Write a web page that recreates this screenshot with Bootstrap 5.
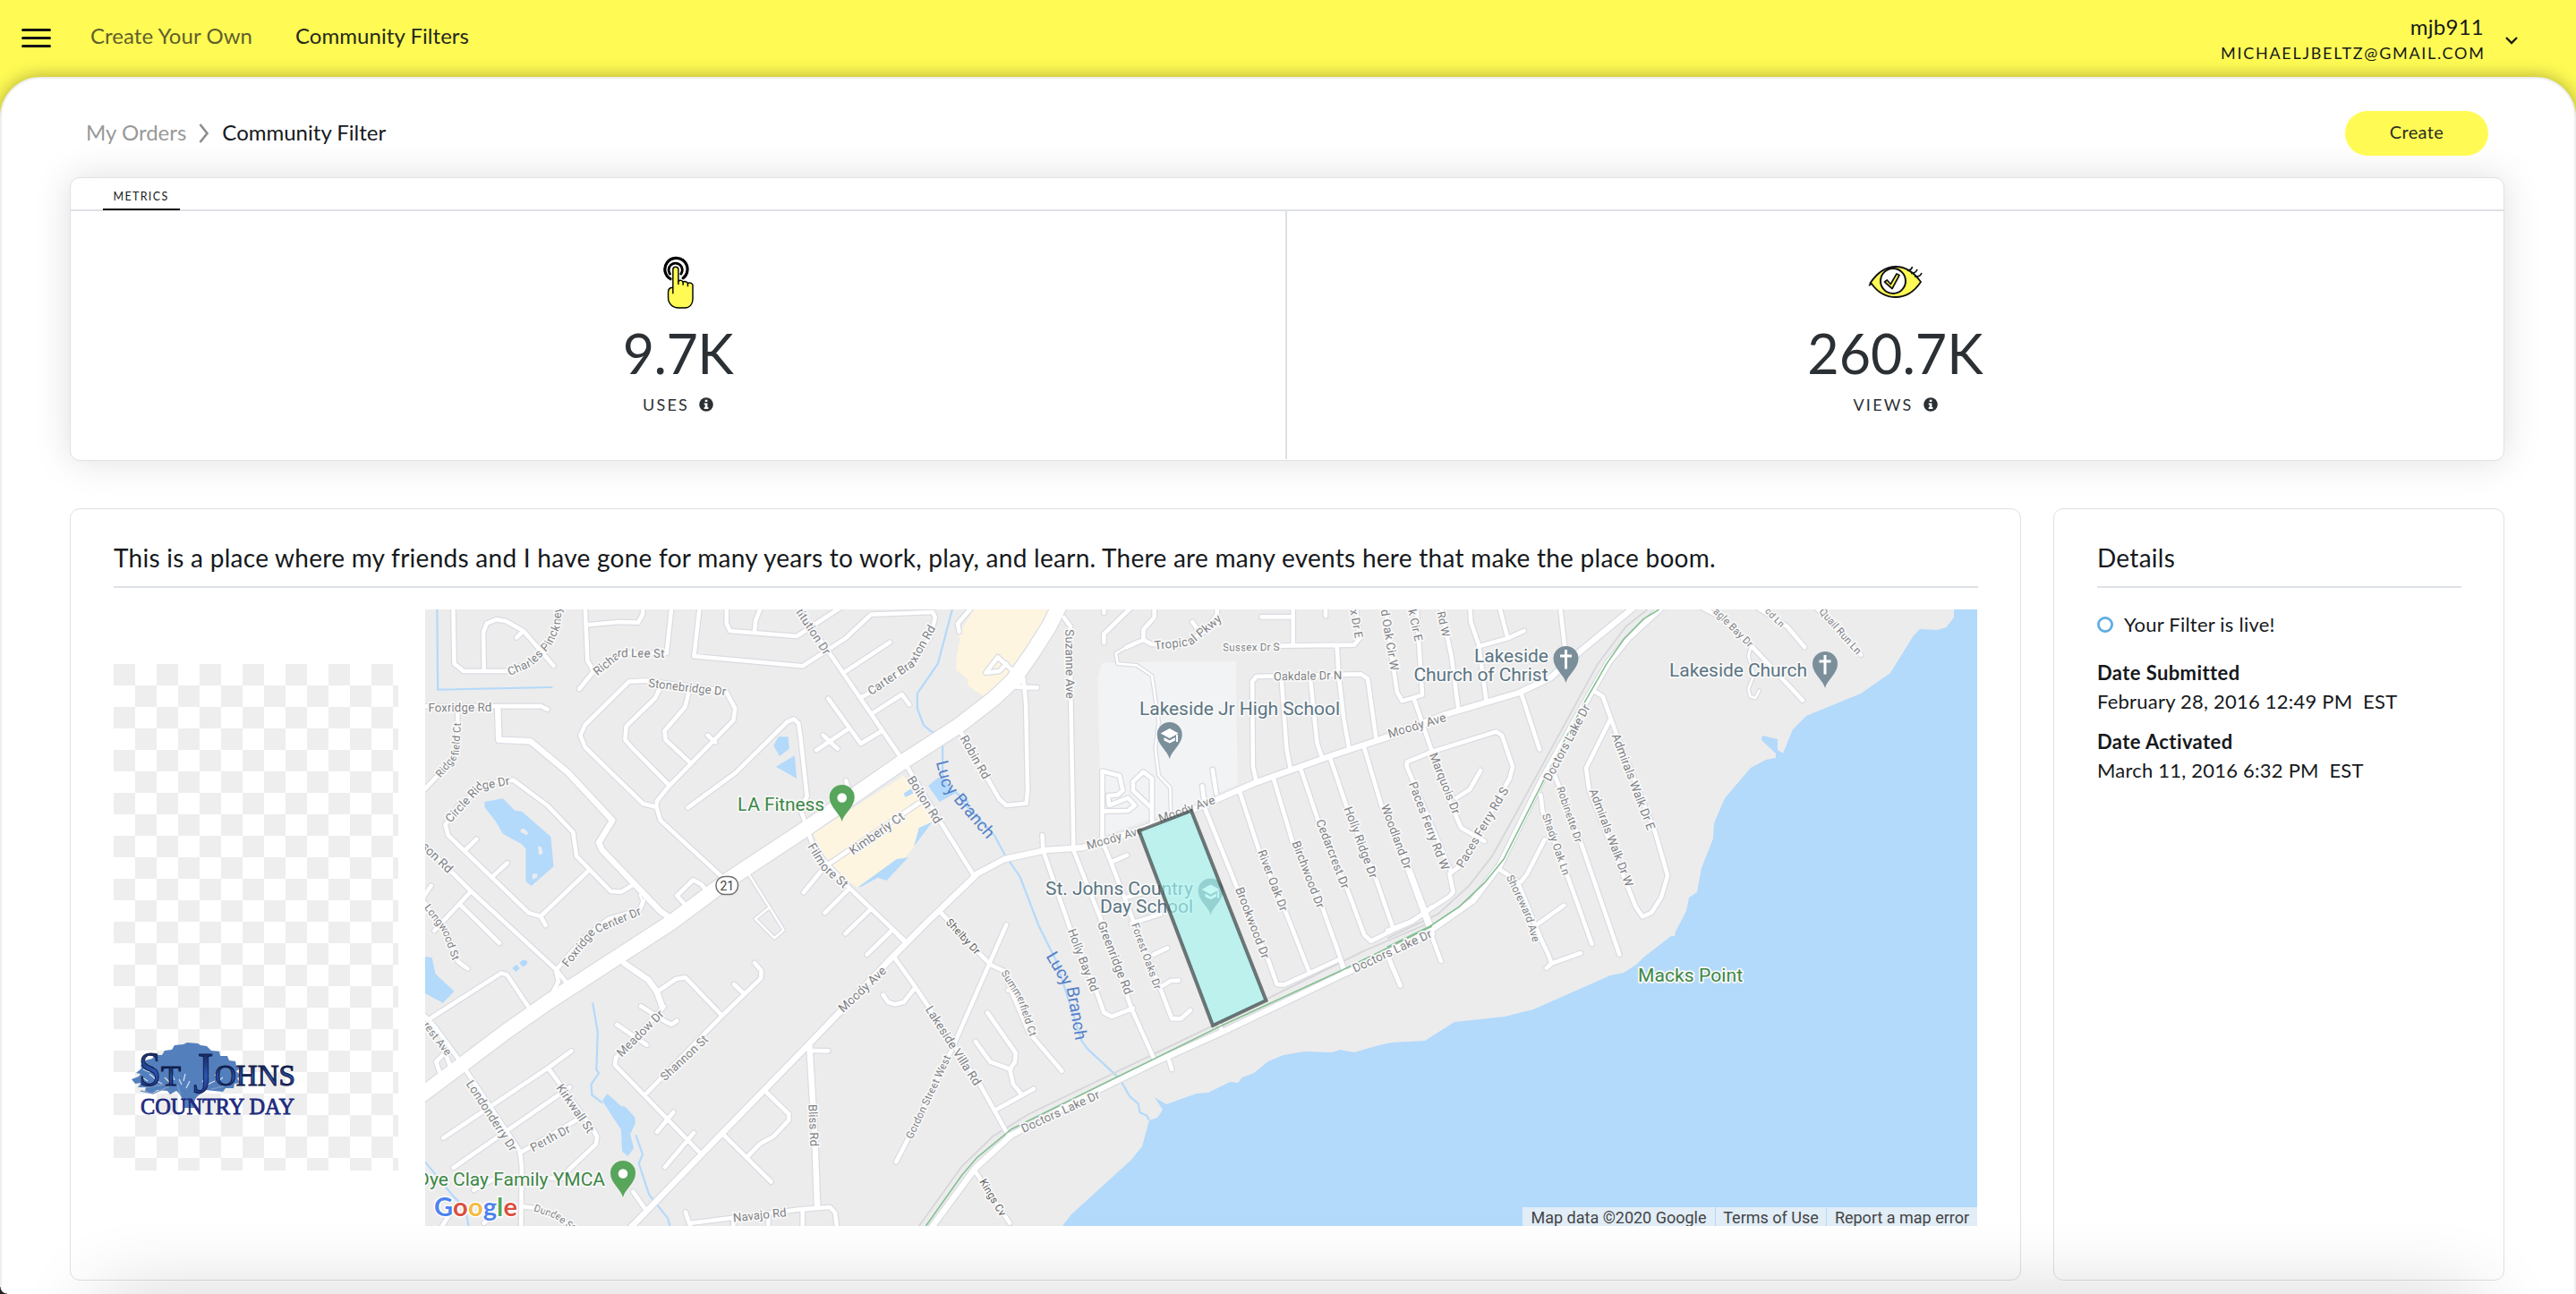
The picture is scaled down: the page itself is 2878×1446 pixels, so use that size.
<!DOCTYPE html>
<html lang="en">
<head>
<meta charset="utf-8">
<meta name="viewport" content="width=device-width, initial-scale=1">
<title>Community Filter</title>
<link href="https://cdn.jsdelivr.net/npm/bootstrap@5.3.0/dist/css/bootstrap.min.css" rel="stylesheet">
<style>
  html, body { height: 100%; overflow: hidden; }
  body { background: #fffb54; font-family: Lato, "Noto Sans", sans-serif; color: #16191c; line-height: 1; }
  .topbar { height: 86px; padding: 0 65px 0 24px; }
  .menu-icon { width: 33px; height: 22px; margin-right: 44px; }
  .top-link { font-size: 24px; color: #5f5f2c; text-decoration: none; white-space: nowrap; letter-spacing: .05px; padding-bottom: 6px; }
  .top-link.current { color: #26281c; }
  .sheet { height: 1400px; background: #fff; border: 2px solid #efefef; border-radius: 45px 45px 0 0; box-shadow: 0 0 20px rgba(0,0,0,.33); padding: 36px 78px 0 76px; }
  .user-name { letter-spacing: .25px; }
  .user-mail { font-size: 18px; letter-spacing: 1.72px; margin-right: -1.7px; }
  .crumbs { font-size: 24px; padding: 0 0 3px 18px; }
  .crumbs a { color: #999; text-decoration: none; }
  .btn-create { width: 160px; height: 50px; background: #fffb54; color: #2b2d22; font-size: 20px; border: 0; padding: 0 0 5px; margin-right: 18px; letter-spacing: .35px; }
  .panel { border: 1.5px solid #dee2e6; border-radius: 11px; background: #fff; }
  .metrics { height: 317px; margin-top: 24px; box-shadow: 0 0 42px rgba(0,0,0,.13); }
  .tabs { height: 37px; border-bottom: 2px solid #dee2e6; padding-left: 36px; }
  .tab-on { width: 86px; height: 36px; font-size: 12.5px; padding-top: 15px; border-bottom: 2.5px solid #111; text-align: center; letter-spacing: 1.35px; text-indent: -1px; }
  .half { height: 277px; padding-top: 49px; }
  .metric-value { font-size: 61px; color: #2b3035; margin-top: 17px; }
  .metric-label { font-size: 18px; color: #2b3035; letter-spacing: 2.25px; margin-top: 18px; }
  .divide { border-right: 2px solid #dee2e6; }
  .lower { margin-top: 53px; gap: 36px; }
  .lower .panel { height: 863px; padding: 40px 47px 0 48px; }
  .headline { font-size: 28px; height: 48px; border-bottom: 2px solid #dee2e6; white-space: nowrap; letter-spacing: .27px; }
  .main-card { width: 2180px; }
  .side-card { width: 504px; }
  .preview { width: 318px; height: 566px; margin-top: 61px; background: #fff repeating-conic-gradient(#fff 0 25%, #eee 0 50%) 0 0 / 48px 48px; }
  .map-box { width: 1734px; height: 689px; overflow: hidden; }
  .map-legal { position: absolute; right: 0; bottom: 0; font: 18px/21px Roboto, sans-serif; color: #444; gap: 1px; }
  .map-legal span { background: #e1edf7; height: 21px; padding: 1px 8px 0; white-space: nowrap; text-align: center; }
  .facts { font-size: 22px; letter-spacing: .22px; }
  .facts .fw-bold { letter-spacing: .4px; }
  .stamp { margin-top: 10px; white-space: pre; }
  .bottom-shade { position: absolute; left: 120px; right: 120px; top: 1462px; height: 50px; box-shadow: 0 0 90px 10px rgba(0,0,0,.2); }
  .win-corner { position: absolute; left: 0; bottom: 0; width: 8px; height: 8px; background: radial-gradient(circle at 100% 0, transparent 7px, #222 8px); }
  #roads path { fill: none; stroke-linecap: round; stroke-linejoin: round; vector-effect: non-scaling-stroke; stroke-width: calc(4.6px + var(--edge)); }
  #roads path.mid { stroke-width: calc(6.5px + var(--edge)); }
  #roads path.hwy { stroke-width: calc(16.5px + var(--edge)); }
  #roads path.thin { stroke-width: calc(2.6px + var(--edge)); }
  .casing { --edge: 2.4px; stroke: #dadbe2; }
  .fillup { --edge: 0px; stroke: #fff; }
  .brook { fill: none; stroke: #b3d9fb; stroke-width: 2.2px; vector-effect: non-scaling-stroke; }
  .lake { fill: #b3d9fb; } .shops { fill: #fdf5e0; }
  .rail { fill: none; stroke: #d6d6da; stroke-width: 1.8px; vector-effect: non-scaling-stroke; }
  .trail { fill: none; stroke: #86bf92; stroke-width: 1.6px; vector-effect: non-scaling-stroke; }
  .halo { paint-order: stroke; stroke: #f8f8f8; stroke-width: 3.6px; stroke-linejoin: round; font-family: Roboto, sans-serif; }
  .street { fill: #7e8185; } .street.dark { fill: #5d5d5a; } .street.blue { fill: #5580c8; stroke: none; }
  .poi { font-size: 21px; fill: #5b7583; } .poi.go { fill: #3c8746; }
</style>
</head>
<body class="position-relative">
<header class="topbar d-flex align-items-center justify-content-between">
  <nav class="d-flex align-items-center">
    <svg class="menu-icon" viewBox="0 0 33 22"><path d="M1.500 1.500h30M1.500 10.500h30M1.500 19.500h30" stroke="#141414" stroke-width="3" stroke-linecap="round"/></svg>
    <a class="top-link me-5" href="#">Create Your Own</a>
    <a class="top-link current" href="#">Community Filters</a>
  </nav>
  <div class="d-flex align-items-center">
    <div class="text-end me-4">
      <div class="user-name fs-4 mb-2">mjb911</div>
      <div class="user-mail">MICHAELJBELTZ@GMAIL.COM</div>
    </div>
    <svg class="mt-1" width="14" height="9" viewBox="0 0 14 9"><path d="M1 1l6 6 6-6" fill="none" stroke="#1b1b10" stroke-width="2.400"/></svg>
  </div>
</header>
<main class="sheet">
  <div class="d-flex justify-content-between align-items-center">
    <div class="crumbs d-flex align-items-center">
      <a href="#">My Orders</a>
      <svg style="margin:3px 14px 0" width="12" height="22" viewBox="0 0 12 22"><path d="M1.500 1l8 10-8 10" fill="none" stroke="#8d8d8d" stroke-width="2.600"/></svg>
      <span>Community Filter</span>
    </div>
    <button class="btn btn-create rounded-pill">Create</button>
  </div>

  <section class="panel metrics">
    <div class="tabs"><div class="tab-on">METRICS</div></div>
    <div class="d-flex">
      <div class="half w-50 divide text-center">
        <svg class="d-block mx-auto" width="36" height="62" viewBox="0 0 38 62">
          <g fill="none" stroke="#000" stroke-width="3.400" stroke-linecap="round"><path d="M9.500 26.500A13.300 13.300 0 1 1 24.500 25.500"/><path d="M9 20.500A8 8 0 1 1 22 20.500" stroke-width="3"/></g>
          <path d="M12.500 44V15.500a3.200 3.200 0 0 1 6.400 0V29c2-1.500 4.500-1 5.500 1 2-1 4.500-.5 5.500 1.500 2.500-1 6 0 6 2.500v16c0 6-3.500 10.500-9 10.500h-8c-7 0-12-5-12-12V42c0-3.500 2-5.500 5.600-5.500" fill="#fffb54" stroke="#000" stroke-width="1.500"/><path d="M24.400 30v4M30 31.500v4M18.900 29v4" stroke="#000" stroke-width="1.500"/>
        </svg>
        <div class="metric-value" style="letter-spacing:-.5px">9.7K</div>
        <div class="metric-label d-flex justify-content-center align-items-center"><span>USES</span><svg style="margin-left:11px" width="16" height="16" viewBox="0 0 16 16"><circle cx="8" cy="8" r="7.800" fill="#2b3035"/><path d="M6.700 2.800h2.700v2.300H6.700zM5.700 6.400h3.700v4.700h1v1.800H5.700v-1.800h1V8.200h-1z" fill="#fff"/></svg></div>
      </div>
      <div class="half w-50 text-center">
        <svg class="d-block mx-auto" width="64" height="62" viewBox="-2 -13 64 62">
          <path d="M1 19C11 4 21 0 30 0c11 0 20 6 28 17-8 12-17 17-28 17S10 29 3 19l-3 2" fill="#fffb54" stroke="#111" stroke-width="1.800"/>
          <circle cx="27" cy="16" r="14" fill="#fff" stroke="#111" stroke-width="2"/>
          <path d="M17.500 17l2.800-2 4 4.500L31 8l3 1.500L26 24.500z" fill="#fffb54" stroke="#111" stroke-width="1.700" stroke-linejoin="round"/>
          <path d="M43 4.500c3-.5 5-2 5.500-4.500M47 7.500c4 0 6-1.500 7-4.500M51 11c4 .5 7-1 8-4" fill="none" stroke="#111" stroke-width="1.600"/>
        </svg>
        <div class="metric-value">260.7K</div>
        <div class="metric-label d-flex justify-content-center align-items-center"><span>VIEWS</span><svg style="margin-left:11px" width="16" height="16" viewBox="0 0 16 16"><circle cx="8" cy="8" r="7.800" fill="#2b3035"/><path d="M6.700 2.800h2.700v2.300H6.700zM5.700 6.400h3.700v4.700h1v1.800H5.700v-1.800h1V8.200h-1z" fill="#fff"/></svg></div>
      </div>
    </div>
  </section>

  <section class="lower d-flex">
    <article class="panel main-card">
      <div class="headline">This is a place where my friends and I have gone for many years to work, play, and learn. There are many events here that make the place boom.</div>
      <div class="d-flex" style="gap:30px;margin-top:24px">
        <div class="preview">
          <svg width="318" height="566" viewBox="127 742 318 566">
            <defs><linearGradient id="ink" x1="0" y1="0" x2="0" y2="1"><stop offset="0" stop-color="#0a1330"/><stop offset=".55" stop-color="#2b55b0"/><stop offset="1" stop-color="#1a2070"/></linearGradient></defs>
            <path fill="#537fbd" d="M147 1206l8-3 2-3-5-1 6-5-1-4 6-1-1-4 8-2 3-4 8 0 3-5 8-1 3-5 10-1 4-2 12 1 3 2 7 1 5 5 9 1 1 5 8 0 2 5 7 1 1 5 4 3-4 3 5 5-4 3 3 5-6 1-1 5-9 0-3 4-10-1-9-1-8 6c-5 4-6 8-4 14h-13c1-7-3-15-8-19l-7 4-3-4-11-1-7 4-7-3 1-4-9 0 4-5-7 1z"/>
            <path d="M157 1219l14 3 18-8M163 1215l20-3M236 1217l14-3M198 1212l4 12" fill="none" stroke="#7898c6" stroke-width="1.400"/>
            <path d="M159 1204l6 4M167 1200l7 6M175 1208l6 3M184 1204l6 6M192 1200l3 7M233 1201l-7 8M246 1196l-6 6M160 1195l7 3M207 1200l-2 8M240 1208l-8 4M200 1206l3 6M212 1208l-4 8M249 1204l-6 5M172 1193l4 5" stroke="#d3deee" stroke-width="1.300"/>
            <g font-family="'Liberation Serif',serif" fill="url(#ink)" stroke="#101a48" stroke-width="1.100">
              <text x="155" y="1213" font-size="55" textLength="25" lengthAdjust="spacingAndGlyphs">S</text>
              <text x="180" y="1213" font-size="32" textLength="22" lengthAdjust="spacingAndGlyphs">T</text>
              <text x="216" y="1221" font-size="66" textLength="22" lengthAdjust="spacingAndGlyphs">J</text>
              <text x="240" y="1213" font-size="33" textLength="90" lengthAdjust="spacingAndGlyphs">OHNS</text>
              <text x="157" y="1245" font-size="25" fill="#202a80" stroke="#202a80" stroke-width=".8" textLength="172" lengthAdjust="spacingAndGlyphs">COUNTRY DAY</text>
            </g>
          </svg>
        </div>
        <div class="map-box position-relative">
          <svg width="1734" height="689" viewBox="475 681 1734 689" id="map">
            <defs>
              <path id="pin" d="M0 0C-2-9-14-16-14-27A14 14 0 1 1 14-27C14-16 2-9 0 0Z"/>
              <g id="roads">
                <g transform="translate(470 670) scale(.38265 .33333)">
                  <path d="M95 20L98 215 125 240 250 240M185 240L183 110 193 80 220 67 248 72 300 105 388 222M300 105L280 127M250 240L330 205 380 130 400 60 403 20M480 20L487 205 505 240 463 300M505 240L580 180 718 180 733 20M487 85L580 75 635 77 648 50 650 20M815 20L798 190 1115 223 1240 130 1315 50 1495 42 1502 60 1490 120 1440 210 1350 290 1285 328M893 20V80L903 105 1098 123 1235 20M975 105L978 70 995 20M1235 245L1370 143M1318 382L1405 318 1427 352M1190 332L1285 483 1340 445M1245 436L1155 505M1175 455L1217 500M660 272L608 275 480 420 466 455 480 495 650 685 688 695M660 272L890 305 918 365 913 405 725 625 690 675 688 695 700 740 785 830 880 930M697 300L685 330 600 425 597 470 620 500 725 622M785 300L772 360 712 440 715 470 790 550M838 455L860 478M780 698L920 580 1070 410 1090 400 1103 415 1110 470 1128 660 1108 700 1135 790 1150 840 1250 965 1415 1145M0 358L350 357 370 368M108 370V500L95 535 0 650M270 605L370 690 445 780 455 860 555 978 585 980 615 960M270 605L200 615 110 690 72 755 80 790 315 1050 350 1062 487 912M350 1062L365 1092M130 840L163 803M213 925L253 883M0 810L147 978 395 1240 430 1290M147 978L40 1110M30 960L0 1010M113 1020L230 1152M0 1000L75 1110 110 1215 137 1237M650 1010L640 1040 550 1070 480 1130 395 1242M770 1020L748 993 795 940 820 955 833 975M1470 670L1180 895 1118 982M1250 970L1180 1050M1312 1040L1240 1120M1375 1110L1303 1190M1242 607L1250 640"/>
                  <path class="thin" d="M960 925L1060 1108 1033 1135 977 1070 1015 1035M640 990L650 1020"/>
                  <path d="M1085 0L1200 190 1420 560 1520 750 1615 925"/>
                  <path class="mid" d="M225 360L228 470 320 475 430 580 560 740 520 815 530 840 700 1045 725 1065"/>
                </g>
                <g transform="translate(1000 670) scale(.38265 .33333)">
                  <path d="M225 25L183 80 187 108M370 265L345 240 300 193 265 245 305 240 325 215M350 292L415 295M350 292L375 265 382 350 387 640 383 683 325 690 305 670 195 450M493 60L512 90 513 330 521 840 600 1070 690 1370 760 1550M430 790L432 840 510 1100 590 1320 610 1385 632 1398 695 1370M695 20L610 115V145M610 20V45M757 20V60L725 100V135L750 150 830 155 900 110 940 50V20M725 135L675 160M868 75L890 110M605 810V575L655 590 665 640 650 655 622 658 625 690 680 665 700 690 680 708 605 710M750 750V600L725 578 695 610V640L750 700M605 810L630 880 700 1090 780 1320 808 1405 835 1405 862 1377M630 880L677 857M690 1085L775 1055M680 997L720 985M755 1190L795 1168M780 1295L805 1278 828 1277M897 625L905 700 1000 970 1090 1210 1115 1290 1135 1292 1300 1205M927 570L938 650M1005 640L1065 850 1145 1060 1208 1245M1105 600L1160 810 1250 1040 1312 1240M1185 570L1235 740 1320 970 1370 1125 1390 1145 1450 1110 1510 1080 1568 1030M1270 530L1320 700 1405 940 1455 1105M1368 490L1420 690 1505 910 1567 1100M1055 610L1045 560 1043 275 1055 258 1360 250 1380 265 1405 470M1128 260L1143 500 1155 570M1212 260L1232 480 1245 525M1290 155L1295 250 1310 400 1325 495M1120 155L1340 152 1357 130 1345 20M1162 20V155M1070 58H1160M1257 20V55M130 1045L245 1185 280 1225 318 1245"/>
                  <path class="thin" d="M675 160L645 180 650 215 705 220 750 255 770 410 760 500 770 590 803 630 805 710"/>
                  <path class="mid" d="M230 925L320 870 440 840 545 832 720 770 870 705 1050 615 1270 525 1440 460 1600 395"/>
                </g>
                <g transform="translate(1550 670) scale(.43367 .33333)">
                  <path d="M-5 20L10 180 25 310 38 340 90 320 75 20M68 330L115 510 165 690 190 765 250 810M137 20L165 190 183 370M213 20L215 75 235 150 255 340M240 155L310 130 352 105M310 130L288 20M445 20L458 170M345 315L392 502M178 665L212 637 240 573M165 915L50 560V545L115 510 280 443 295 455 323 560 315 600 190 890 160 920 170 980 160 995 60 1080 0 1110M530 305L555 325 590 450 690 780 722 925 705 1000 680 1050 657 1063 640 1030 520 640 512 565 575 400M430 585L500 820 598 1190M395 655L400 710 465 930 527 1155M290 905L335 945 400 1150 415 1190 423 1220 410 1235M423 1220L498 1185M345 945L360 920 405 805M385 1090L455 1025M800 20L860 60 945 165 1070 338M945 20L1030 90 1075 160M1100 20L1150 90 1220 185M45 880L138 1212M0 1190L33 1292"/>
                  <path class="thin" d="M935 165L930 190 945 250 930 300 935 325 948 330 958 305"/>
                  <path class="mid" d="M-20 470L150 385 340 312 420 262 500 170 650 10M720 10L620 130 570 210 510 345 400 600 290 890 220 1010 110 1110 0 1185"/>
                </g>
                <g transform="translate(470 1030) scale(.38265 .33333)">
                  <path d="M20 330L235 172 252 178 320 295M395 165L402 200 380 250M70 440L45 470 60 520M75 450L88 490M66 725L372 490 440 433M372 490L500 690 515 720 512 745 425 840M95 825L435 555M290 775L470 655M690 235L745 192 773 187 880 315M710 285L690 310 570 455 567 480 820 780M643 283L715 335 733 345 748 332M573 345L660 413M655 580L880 315 993 190 995 165 975 138M915 210L943 240M690 705L738 638M713 823L797 708M1008 570L1075 645V665L1030 720 990 745 952 790M885 715L1023 872M1138 432L1190 433M790 1010L1100 965 1195 957 1210 975 1217 1040M773 973L790 1030M913 1000V1030M1015 980V1030M1115 970V1030M1388 805L1440 690 1550 430 1710 10M1443 222L1410 270 1385 277 1365 270 1350 245M620 905L660 970M1380 115L1445 220 1635 550 1715 715M63 1020L95 960M295 955L335 960 400 990 450 1030M155 900L210 865M380 860H420M185 1010L200 995"/>
                  <path d="M-10 290L40 350 110 460 290 770 295 820 293 1030"/>
                  <path class="mid" d="M595 140L665 195 690 235 705 285M1620 -155L1480 0 1380 115 1130 415 820 780 605 1035M1135 415L1150 700 1158 955"/>
                </g>
                <g transform="translate(1000 1030) scale(.38265 .33333)">
                  <path d="M315 165L390 370 487 500M270 305L352 440 350 470 335 495 345 545 370 580M235 402L278 470 338 495M295 630L405 560M330 230L345 220M230 830L335 1010M800 465L808 495M948 345L955 370M0 35L30 70M1440 120L1475 215M1300 125L1310 170"/>
                  <path class="mid" d="M1568 40L1310 175 955 370 760 470 600 560 340 715 235 825 100 1035"/>
                </g>
                <path class="hwy" d="M465 1228L516 1190 565 1153 612 1120 751 1030 814 983 902 925 1006 853 1070 811.700 1111 780 1132 760 1153 730 1172 700 1188 668"/>
              </g>
            </defs>
            <rect x="475" y="681" width="1734" height="689" fill="#ececec"/>
            <g transform="translate(470 670) scale(.38265 .33333)">
              <path class="shops" d="M1145 785L1410 590 1500 740 1415 865 1275 965 1200 900Z"/>
              <path class="lake" fill-rule="evenodd" d="M187 678L240 667 275 707 295 710 380 795 388 895 323 960 307 945V835L295 820 240 785 220 745 187 697ZM292 770L302 768 314 782 310 790 292 780ZM342 828L352 828 357 850 346 857ZM326 920L340 918V932L326 938ZM1030 490L1045 460H1073L1076 500 1048 525ZM1037 560L1092 523 1098 600ZM1495 745L1440 828 1455 765ZM1278 963L1390 870 1423 865 1360 942 1335 932 1285 963ZM1410 650L1435 632 1438 650 1415 662ZM1482 625L1510 598 1530 600 1560 650 1515 678Z"/>
              <path class="brook" d="M48 33L50 302 385 294M1552 33L1510 215 1450 315V365L1468 420 1490 442 1505 447M1524 490V600M1555 640L1600 680"/>
            </g>
            <g transform="translate(1000 670) scale(.38265 .33333)">
              <path class="shops" d="M230 33H470L395 180 345 270 262 328 215 290 210 265 178 235 180 190 190 130 183 120Z"/>
              <path fill="#f1f3f5" d="M605 213L757 208H995L1000 620 860 690 610 790 597 560 592 260Z"/>
              <path class="brook" d="M190 670L290 790 320 855 365 930 420 1095 470 1210 545 1480 565 1510 650 1600 665 1625 685 1665 710 1690 715 1720 735 1730 742 1745"/>
            </g>
            <g transform="translate(470 1030) scale(.38265 .33333)">
              <path class="lake" d="M13 117L33 120 43 175 98 233 65 272 13 240ZM530 600L545 577 585 618 597 620 625 655 627 675 612 712 622 760 605 785 588 770 585 697ZM267 155L280 144 290 156 278 168ZM288 137L300 127 311 132V142L298 152Z"/>
              <path class="brook" d="M502 272L517 370 513 495 520 508 498 545 500 580 530 607M628 715L648 780 637 810 667 915 722 995 728 1020M13 805L95 920 130 960 140 1020"/>
            </g>
            <path class="lake" d="M2183 681V690L2174.500 701 2164.500 704 2145 703 2138 710 2112 752 2079 775 2018 800 2003 815 1992 842 1986 838V826L1969 822 1968 827 1984 842V847L1973 849 1956 858 1927 892 1915 920 1914 937 1901 970 1896 997 1887 1003 1884 1018 1872 1041 1871 1046H1867L1836 1070 1828 1078 1814 1087 1799 1090 1713 1128 1681 1136 1625 1142 1592 1163 1555 1165 1541 1168 1513 1176 1497 1173 1488 1176 1457 1175 1434 1179 1417 1186 1401 1199 1388 1204 1383 1210 1374 1209 1350 1221 1337 1222 1303 1234 1290 1226 1299 1240 1293 1249 1284 1252 1276 1281 1264 1296 1197 1357 1187 1370H2209V681Z"/>
            <use href="#roads" class="casing"/>
            <g transform="translate(1000 1030) scale(.38265 .33333)"><path class="rail" d="M1568 0L1365 100 925 350 580 540 390 645 285 720 195 820 70 1020"/></g>
            <g transform="translate(1550 670) scale(.43367 .33333)"><path class="rail" d="M670 33L615 90 540 220 435 470 330 720 270 860 210 960 130 1055 0 1135"/></g>
            <use href="#roads" class="fillup"/>
            <g transform="translate(1000 1030) scale(.38265 .33333)"><path class="trail" d="M1568 15L1310 160 950 350 650 520 340 695 240 790 195 850 90 1020"/></g>
            <g transform="translate(1550 670) scale(.43367 .33333)"><path class="trail" d="M700 33L660 65 608 135 565 215 510 340 405 600 300 870 250 950 185 1030 110 1095 0 1165"/></g>
            <g id="streets"></g>
            <g class="halo poi">
              <text x="1273" y="799" textLength="224">Lakeside Jr High School</text>
              <text x="1168" y="999.500" textLength="165">St. Johns Country</text>
              <text x="1229" y="1020" textLength="104">Day School</text>
              <text x="1647" y="739.500" textLength="83">Lakeside</text>
              <text x="1579.500" y="760.500" textLength="150">Church of Christ</text>
              <text x="1865" y="756" textLength="154">Lakeside Church</text>
            </g>
            <g class="halo poi go">
              <text x="824" y="906" textLength="97">LA Fitness</text>
              <text x="676" y="1325" text-anchor="end">Dye Clay Family YMCA</text>
              <text x="1830" y="1097" textLength="117">Macks Point</text>
            </g>
            <g fill="#7b8f9b">
              <use href="#pin" x="1306.700" y="848"/><use href="#pin" x="1352.600" y="1022.500"/><use href="#pin" x="1749.500" y="763"/><use href="#pin" x="2039" y="769"/>
            </g>
            <g fill="#58a55c"><use href="#pin" x="940.700" y="918"/><use href="#pin" x="696" y="1338"/></g>
            <g fill="#fff"><circle cx="940.700" cy="891.500" r="5.300"/><circle cx="696" cy="1311.500" r="5.300"/>
              <path id="cap" d="M1306.700 814l10 5.500-10 5.500-10-5.500zM1300.500 824l6.200 3.500 6.200-3.500v3.500l-6.200 3-6.200-3zM1314 821h2v8h-2z"/><use href="#cap" x="45.900" y="174.500"/>
              <path id="cross" d="M1748 726h3v5.500h5v3h-5v13h-3v-13h-5v-3h5z"/><use href="#cross" x="289.500" y="6"/></g>
            <path d="M1272.500 928.500L1331 906 1414.500 1118 1355 1146Z" fill="rgba(165,245,240,.65)" stroke="rgba(60,66,66,.7)" stroke-width="4"/>
            <rect x="800" y="979.500" width="24.500" height="20" rx="9.500" fill="#fff" stroke="#707070" stroke-width="1.500"/>
            <text x="812.300" y="995" text-anchor="middle" font-family="Roboto,sans-serif" font-size="14" fill="#444">21</text>
            <text x="485" y="1359" font-size="29" textLength="93" font-family="Lato,sans-serif" font-weight="700" stroke="#fff" stroke-width="3" paint-order="stroke"><tspan fill="#4d83ee">G</tspan><tspan fill="#dd4f3e">o</tspan><tspan fill="#f5bc42">o</tspan><tspan fill="#4d83ee">g</tspan><tspan fill="#53a758">l</tspan><tspan fill="#dd4f3e">e</tspan></text>
          </svg>
          <div class="map-legal d-flex"><span style="width:215px">Map data ©2020 Google</span><span style="width:123px">Terms of Use</span><span style="width:168px">Report a map error</span></div>
        </div>
      </div>
    </article>
    <aside class="panel side-card">
      <div class="headline">Details</div>
      <div class="facts">
        <div class="d-flex align-items-center" style="margin-top:30px"><svg width="18" height="18" style="margin-right:12px"><circle cx="9" cy="9" r="7.600" fill="none" stroke="#5aaee3" stroke-width="2.800"/></svg><span>Your Filter is live!</span></div>
        <div class="fw-bold" style="margin-top:32px">Date Submitted</div>
        <div class="stamp">February 28, 2016 12:49 PM  EST</div>
        <div class="fw-bold" style="margin-top:23px">Date Activated</div>
        <div class="stamp">March 11, 2016 6:32 PM  EST</div>
      </div>
    </aside>
  </section>
</main>
<div class="bottom-shade"></div>
<div class="win-corner"></div>
<script src="https://cdn.jsdelivr.net/npm/bootstrap@5.3.0/dist/js/bootstrap.bundle.min.js"></script>
<script>
// Map tiles: origin x, origin y and horizontal units per pixel; vertical is one third everywhere.
const tiles = {A:[470,670,.38265],B:[1000,670,.38265],C:[1550,670,.43367],D:[470,1030,.38265],E:[1000,1030,.38265]};
// Street names with the line each one runs along.
const names = [
['A','Charles Pinckney',[255,243,320,210,370,150,395,90,400,20]],['A','Richard Lee St',[508,245,580,178,715,180]],['A','Stonebridge Dr',[665,278,760,292,895,308]],
['A','Foxridge Rd',[22,362,210,360]],['A','Ridgefield Ct',[50,590,100,520,107,410]],['A','Circle Ridge Dr',[78,740,170,625,262,605]],['A','son Rd',[8,820,90,910]],
['A','Longwood St',[18,1025,75,1110,105,1210]],['A','Foxridge Center Dr',[420,1225,500,1110,645,1040]],['A','titution Dr',[1105,33,1190,182]],['A','Carter Braxton Rd',[1308,310,1430,215,1495,85]],
['A','Bolton Rd',[1430,595,1515,748]],['A','Kimberly Ct',[1255,845,1410,720]],['A','Filmore St',[1140,820,1180,895,1245,960]],
['B','Lucy Branch',[137,540,155,620,285,795],'blue'],['B','Robin Rd',[200,458,270,600]],['B','Suzanne Ave',[510,100,512,335]],['B','Tropical Pkwy',[757,154,860,140,950,55]],
['B','Sussex Dr S',[957,160,1125,158]],['B','Oakdale Dr N',[1105,257,1308,253]],['B','x Dr E',[1340,33,1355,130]],['B','d Oak Cir W',[1430,33,1460,240]],['B','k Cir E',[1510,33,1530,140]],
['C','Moody Ave',[2,450,152,392]],['B','Moody Ave',[560,825,725,770]],['B','Moody Ave',[770,735,935,668]],['B','River Oak Dr',[1070,840,1138,1045]],['B','Birchwood Dr',[1170,810,1245,1035]],
['B','Cedarcrest Dr',[1240,738,1318,970]],['B','Holly Ridge Dr',[1322,695,1400,935]],['B','Woodland Dr',[1430,688,1500,905]],['B','Brookwood Dr',[1005,965,1085,1205]],
['B','Greenridge Rd',[602,1080,685,1325]],['B','Forest Oaks Dr',[700,1085,770,1308]],['B','Holly Bay Rd',[515,1105,585,1315]],['B','Shelby Dr',[155,1075,245,1185],'dark'],
['C','Rd W',[138,40,152,125]],['C','Marquois Dr',[118,515,180,720]],['C','Paces Ferry Rd W',[65,612,152,908]],['C','Paces Ferry Rd S',[185,895,305,628]],['C','Doctors Lake Dr',[410,605,515,350]],
['C','Admirals Walk Dr E',[588,450,682,775]],['C','Admirals Walk Dr W',[530,635,626,965]],['C','Robinette Dr',[445,628,495,815]],['C','Shady Oak Ln',[408,718,463,925]],['C','Shoreward Ave',[315,925,365,1060,385,1150]],
['E','Doctors Lake Dr',[1337,158,1568,35]],['C','agle Bay Dr',[845,33,940,155]],['C','od Ln',[978,33,1020,88]],['C','Quail Run Ln',[1118,33,1218,180]],
['D','rest Ave',[15,340,85,445]],['D','Londonderry Dr',[142,535,275,768]],['D','Kirkwall St',[405,548,500,705]],['D','Perth Dr',[322,760,435,690]],['D','Meadow Dr',[578,445,705,300]],
['D','Shannon St',[705,525,835,385]],['D','Moody Ave',[1225,295,1355,155]],['D','Bliss Rd',[1145,612,1150,755]],['D','Navajo Rd',[912,992,1070,973]],['D','Gordon Street West',[1425,725,1540,445]],
['D','Dundee St',[332,958,400,985,450,1030]],['E','Lakeside Villa Rd',[98,285,245,548]],['E','Summerfield Ct',[318,165,370,260,405,385]],['E','Lucy Branch',[455,105,520,230,545,400],'blue'],
['E','Doctors Lake Dr',[370,695,598,575]],['E','Kings Cv',[255,865,318,985],'dark']];
const NS = 'http://www.w3.org/2000/svg', layer = document.getElementById('streets');
names.forEach(([t, label, pts, tone], i) => {
  const [ox, oy, k] = tiles[t], xy = [];
  for (let j = 0; j < pts.length; j += 2) xy.push((ox + pts[j] * k).toFixed(1) + ' ' + (oy + pts[j + 1] / 3).toFixed(1));
  const line = document.createElementNS(NS, 'path'), text = document.createElementNS(NS, 'text'), run = document.createElementNS(NS, 'textPath');
  line.id = 'st' + i; line.setAttribute('d', 'M' + xy.join('L')); line.setAttribute('fill', 'none');
  run.setAttribute('href', '#st' + i); run.textContent = label;
  text.setAttribute('class', 'halo street ' + (tone || '')); text.setAttribute('dy', '.36em');
  text.style.fontSize = '10px'; text.textContent = label;
  layer.append(line, text);
  // Size each name so that it fills its line.
  const size = 10 * line.getTotalLength() / text.getComputedTextLength() * .985;
  text.textContent = ''; text.append(run); text.style.fontSize = size.toFixed(2) + 'px';
});
</script>
</body>
</html>
